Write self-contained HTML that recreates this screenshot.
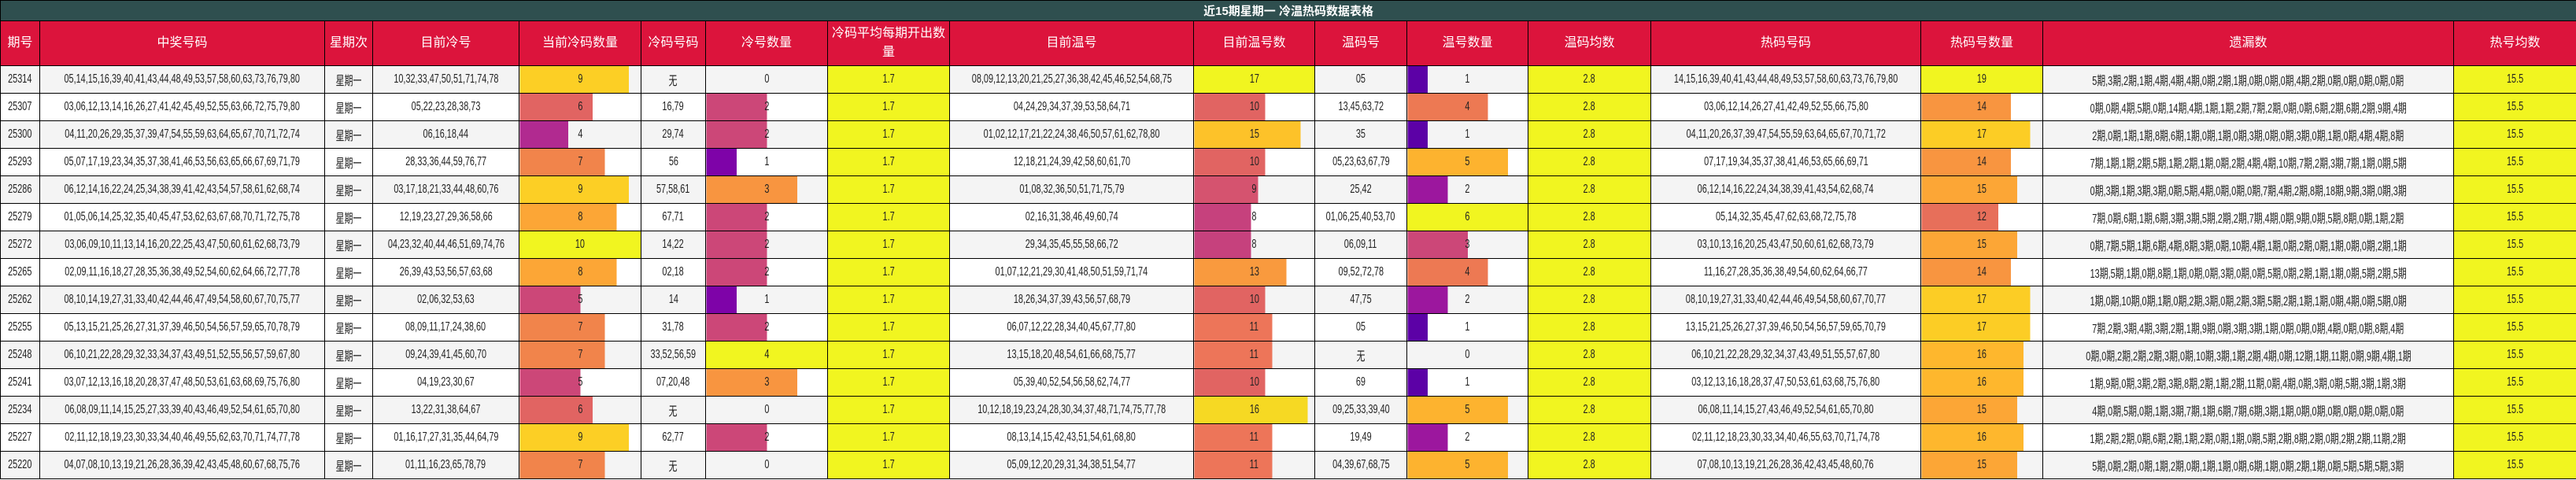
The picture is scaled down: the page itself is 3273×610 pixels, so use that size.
<!DOCTYPE html>
<html><head><meta charset="utf-8">
<style>
body{margin:0;width:3273px;height:610px;overflow:hidden;background:#fff;font-family:"Liberation Sans","Noto Sans CJK SC",sans-serif;}
table{border-collapse:collapse;table-layout:fixed;width:3273px;}
td{border:1px solid #000;text-align:center;vertical-align:middle;font-size:16px;padding:0;height:34px;white-space:nowrap;overflow:hidden;color:#222;}
td span{display:inline-block;transform:scaleX(.68);margin:0 -200px;}
tr:nth-child(odd) td{background-color:#f4f4f4;}
tr.t td{background:#2f4f4f !important;color:#fff;font-weight:bold;font-size:15px;height:25px;}
tr.h td{background:#dc143c !important;color:#fff;font-size:16px;height:56px;white-space:normal;line-height:24px;}
td.y{background:#f1f520 !important;}
</style></head><body>
<table>
<colgroup><col style="width:50px"><col style="width:362px"><col style="width:61px"><col style="width:186px"><col style="width:155px"><col style="width:82px"><col style="width:155px"><col style="width:155px"><col style="width:310px"><col style="width:154px"><col style="width:117px"><col style="width:154px"><col style="width:156px"><col style="width:343px"><col style="width:155px"><col style="width:522px"><col style="width:156px"></colgroup>
<tr class="t"><td colspan="17">近15期星期一 冷温热码数据表格</td></tr>
<tr class="h"><td>期号</td><td>中奖号码</td><td>星期次</td><td>目前冷号</td><td>当前冷码数量</td><td>冷码号码</td><td>冷号数量</td><td>冷码平均每期开出数量</td><td>目前温号</td><td>目前温号数</td><td>温码号</td><td>温号数量</td><td>温码均数</td><td>热码号码</td><td>热码号数量</td><td>遗漏数</td><td>热号均数</td></tr>

<tr><td><span>25314</span></td><td><span>05,14,15,16,39,40,41,43,44,48,49,53,57,58,60,63,73,76,79,80</span></td><td><span>星期一</span></td><td><span>10,32,33,47,50,51,71,74,78</span></td><td style="background-image:linear-gradient(90deg,#fccf25 90%,transparent 90%)"><span>9</span></td><td><span>无</span></td><td><span>0</span></td><td class="y"><span>1.7</span></td><td><span>08,09,12,13,20,21,25,27,36,38,42,45,46,52,54,68,75</span></td><td class="y"><span>17</span></td><td><span>05</span></td><td style="background-image:linear-gradient(90deg,#5c01a6 16.7%,transparent 16.7%)"><span>1</span></td><td class="y"><span>2.8</span></td><td><span>14,15,16,39,40,41,43,44,48,49,53,57,58,60,63,73,76,79,80</span></td><td class="y"><span>19</span></td><td><span>5期,3期,2期,1期,4期,4期,4期,0期,2期,1期,0期,0期,0期,4期,2期,0期,0期,0期,0期,0期</span></td><td class="y"><span>15.5</span></td></tr>

<tr><td><span>25307</span></td><td><span>03,06,12,13,14,16,26,27,41,42,45,49,52,55,63,66,72,75,79,80</span></td><td><span>星期一</span></td><td><span>05,22,23,28,38,73</span></td><td style="background-image:linear-gradient(90deg,#e16462 60%,transparent 60%)"><span>6</span></td><td><span>16,79</span></td><td style="background-image:linear-gradient(90deg,#cc4778 50%,transparent 50%)"><span>2</span></td><td class="y"><span>1.7</span></td><td><span>04,24,29,34,37,39,53,58,64,71</span></td><td style="background-image:linear-gradient(90deg,#e16462 58.8%,transparent 58.8%)"><span>10</span></td><td><span>13,45,63,72</span></td><td style="background-image:linear-gradient(90deg,#ed7953 66.7%,transparent 66.7%)"><span>4</span></td><td class="y"><span>2.8</span></td><td><span>03,06,12,14,26,27,41,42,49,52,55,66,75,80</span></td><td style="background-image:linear-gradient(90deg,#f89540 73.7%,transparent 73.7%)"><span>14</span></td><td><span>0期,0期,4期,5期,0期,14期,4期,1期,1期,2期,7期,2期,0期,0期,6期,2期,6期,2期,9期,4期</span></td><td class="y"><span>15.5</span></td></tr>

<tr><td><span>25300</span></td><td><span>04,11,20,26,29,35,37,39,47,54,55,59,63,64,65,67,70,71,72,74</span></td><td><span>星期一</span></td><td><span>06,16,18,44</span></td><td style="background-image:linear-gradient(90deg,#b12a90 40%,transparent 40%)"><span>4</span></td><td><span>29,74</span></td><td style="background-image:linear-gradient(90deg,#cc4778 50%,transparent 50%)"><span>2</span></td><td class="y"><span>1.7</span></td><td><span>01,02,12,17,21,22,24,38,46,50,57,61,62,78,80</span></td><td style="background-image:linear-gradient(90deg,#fdc229 88.2%,transparent 88.2%)"><span>15</span></td><td><span>35</span></td><td style="background-image:linear-gradient(90deg,#5c01a6 16.7%,transparent 16.7%)"><span>1</span></td><td class="y"><span>2.8</span></td><td><span>04,11,20,26,37,39,47,54,55,59,63,64,65,67,70,71,72</span></td><td style="background-image:linear-gradient(90deg,#fccd25 89.5%,transparent 89.5%)"><span>17</span></td><td><span>2期,0期,1期,1期,8期,6期,1期,0期,1期,0期,3期,0期,0期,3期,0期,1期,0期,4期,4期,8期</span></td><td class="y"><span>15.5</span></td></tr>

<tr><td><span>25293</span></td><td><span>05,07,17,19,23,34,35,37,38,41,46,53,56,63,65,66,67,69,71,79</span></td><td><span>星期一</span></td><td><span>28,33,36,44,59,76,77</span></td><td style="background-image:linear-gradient(90deg,#f1844b 70%,transparent 70%)"><span>7</span></td><td><span>56</span></td><td style="background-image:linear-gradient(90deg,#7e03a8 25%,transparent 25%)"><span>1</span></td><td class="y"><span>1.7</span></td><td><span>12,18,21,24,39,42,58,60,61,70</span></td><td style="background-image:linear-gradient(90deg,#e16462 58.8%,transparent 58.8%)"><span>10</span></td><td><span>05,23,63,67,79</span></td><td style="background-image:linear-gradient(90deg,#fdb32f 83.3%,transparent 83.3%)"><span>5</span></td><td class="y"><span>2.8</span></td><td><span>07,17,19,34,35,37,38,41,46,53,65,66,69,71</span></td><td style="background-image:linear-gradient(90deg,#f89540 73.7%,transparent 73.7%)"><span>14</span></td><td><span>7期,1期,1期,2期,5期,1期,2期,1期,0期,2期,4期,4期,10期,7期,2期,3期,7期,1期,0期,5期</span></td><td class="y"><span>15.5</span></td></tr>

<tr><td><span>25286</span></td><td><span>06,12,14,16,22,24,25,34,38,39,41,42,43,54,57,58,61,62,68,74</span></td><td><span>星期一</span></td><td><span>03,17,18,21,33,44,48,60,76</span></td><td style="background-image:linear-gradient(90deg,#fccf25 90%,transparent 90%)"><span>9</span></td><td><span>57,58,61</span></td><td style="background-image:linear-gradient(90deg,#f89540 75%,transparent 75%)"><span>3</span></td><td class="y"><span>1.7</span></td><td><span>01,08,32,36,50,51,71,75,79</span></td><td style="background-image:linear-gradient(90deg,#d5536f 52.9%,transparent 52.9%)"><span>9</span></td><td><span>25,42</span></td><td style="background-image:linear-gradient(90deg,#9c179e 33.3%,transparent 33.3%)"><span>2</span></td><td class="y"><span>2.8</span></td><td><span>06,12,14,16,22,24,34,38,39,41,43,54,62,68,74</span></td><td style="background-image:linear-gradient(90deg,#fca636 78.9%,transparent 78.9%)"><span>15</span></td><td><span>0期,3期,1期,3期,3期,0期,5期,4期,0期,0期,0期,7期,4期,2期,8期,18期,9期,3期,0期,3期</span></td><td class="y"><span>15.5</span></td></tr>

<tr><td><span>25279</span></td><td><span>01,05,06,14,25,32,35,40,45,47,53,62,63,67,68,70,71,72,75,78</span></td><td><span>星期一</span></td><td><span>12,19,23,27,29,36,58,66</span></td><td style="background-image:linear-gradient(90deg,#fca636 80%,transparent 80%)"><span>8</span></td><td><span>67,71</span></td><td style="background-image:linear-gradient(90deg,#cc4778 50%,transparent 50%)"><span>2</span></td><td class="y"><span>1.7</span></td><td><span>02,16,31,38,46,49,60,74</span></td><td style="background-image:linear-gradient(90deg,#c6417d 47.1%,transparent 47.1%)"><span>8</span></td><td><span>01,06,25,40,53,70</span></td><td class="y"><span>6</span></td><td class="y"><span>2.8</span></td><td><span>05,14,32,35,45,47,62,63,68,72,75,78</span></td><td style="background-image:linear-gradient(90deg,#e76f5a 63.2%,transparent 63.2%)"><span>12</span></td><td><span>7期,0期,6期,1期,6期,3期,3期,5期,2期,2期,7期,4期,0期,9期,0期,5期,8期,0期,1期,2期</span></td><td class="y"><span>15.5</span></td></tr>

<tr><td><span>25272</span></td><td><span>03,06,09,10,11,13,14,16,20,22,25,43,47,50,60,61,62,68,73,79</span></td><td><span>星期一</span></td><td><span>04,23,32,40,44,46,51,69,74,76</span></td><td class="y"><span>10</span></td><td><span>14,22</span></td><td style="background-image:linear-gradient(90deg,#cc4778 50%,transparent 50%)"><span>2</span></td><td class="y"><span>1.7</span></td><td><span>29,34,35,45,55,58,66,72</span></td><td style="background-image:linear-gradient(90deg,#c6417d 47.1%,transparent 47.1%)"><span>8</span></td><td><span>06,09,11</span></td><td style="background-image:linear-gradient(90deg,#cc4778 50%,transparent 50%)"><span>3</span></td><td class="y"><span>2.8</span></td><td><span>03,10,13,16,20,25,43,47,50,60,61,62,68,73,79</span></td><td style="background-image:linear-gradient(90deg,#fca636 78.9%,transparent 78.9%)"><span>15</span></td><td><span>0期,7期,5期,1期,6期,4期,8期,3期,0期,10期,4期,1期,0期,2期,0期,1期,0期,0期,2期,1期</span></td><td class="y"><span>15.5</span></td></tr>

<tr><td><span>25265</span></td><td><span>02,09,11,16,18,27,28,35,36,38,49,52,54,60,62,64,66,72,77,78</span></td><td><span>星期一</span></td><td><span>26,39,43,53,56,57,63,68</span></td><td style="background-image:linear-gradient(90deg,#fca636 80%,transparent 80%)"><span>8</span></td><td><span>02,18</span></td><td style="background-image:linear-gradient(90deg,#cc4778 50%,transparent 50%)"><span>2</span></td><td class="y"><span>1.7</span></td><td><span>01,07,12,21,29,30,41,48,50,51,59,71,74</span></td><td style="background-image:linear-gradient(90deg,#f99a3e 76.5%,transparent 76.5%)"><span>13</span></td><td><span>09,52,72,78</span></td><td style="background-image:linear-gradient(90deg,#ed7953 66.7%,transparent 66.7%)"><span>4</span></td><td class="y"><span>2.8</span></td><td><span>11,16,27,28,35,36,38,49,54,60,62,64,66,77</span></td><td style="background-image:linear-gradient(90deg,#f89540 73.7%,transparent 73.7%)"><span>14</span></td><td><span>13期,5期,1期,0期,8期,1期,0期,0期,3期,0期,0期,5期,0期,2期,1期,1期,0期,5期,2期,5期</span></td><td class="y"><span>15.5</span></td></tr>

<tr><td><span>25262</span></td><td><span>08,10,14,19,27,31,33,40,42,44,46,47,49,54,58,60,67,70,75,77</span></td><td><span>星期一</span></td><td><span>02,06,32,53,63</span></td><td style="background-image:linear-gradient(90deg,#cc4778 50%,transparent 50%)"><span>5</span></td><td><span>14</span></td><td style="background-image:linear-gradient(90deg,#7e03a8 25%,transparent 25%)"><span>1</span></td><td class="y"><span>1.7</span></td><td><span>18,26,34,37,39,43,56,57,68,79</span></td><td style="background-image:linear-gradient(90deg,#e16462 58.8%,transparent 58.8%)"><span>10</span></td><td><span>47,75</span></td><td style="background-image:linear-gradient(90deg,#9c179e 33.3%,transparent 33.3%)"><span>2</span></td><td class="y"><span>2.8</span></td><td><span>08,10,19,27,31,33,40,42,44,46,49,54,58,60,67,70,77</span></td><td style="background-image:linear-gradient(90deg,#fccd25 89.5%,transparent 89.5%)"><span>17</span></td><td><span>1期,0期,10期,0期,1期,0期,2期,3期,0期,2期,3期,5期,2期,1期,1期,0期,4期,0期,5期,0期</span></td><td class="y"><span>15.5</span></td></tr>

<tr><td><span>25255</span></td><td><span>05,13,15,21,25,26,27,31,37,39,46,50,54,56,57,59,65,70,78,79</span></td><td><span>星期一</span></td><td><span>08,09,11,17,24,38,60</span></td><td style="background-image:linear-gradient(90deg,#f1844b 70%,transparent 70%)"><span>7</span></td><td><span>31,78</span></td><td style="background-image:linear-gradient(90deg,#cc4778 50%,transparent 50%)"><span>2</span></td><td class="y"><span>1.7</span></td><td><span>06,07,12,22,28,34,40,45,67,77,80</span></td><td style="background-image:linear-gradient(90deg,#ed7559 64.7%,transparent 64.7%)"><span>11</span></td><td><span>05</span></td><td style="background-image:linear-gradient(90deg,#5c01a6 16.7%,transparent 16.7%)"><span>1</span></td><td class="y"><span>2.8</span></td><td><span>13,15,21,25,26,27,37,39,46,50,54,56,57,59,65,70,79</span></td><td style="background-image:linear-gradient(90deg,#fccd25 89.5%,transparent 89.5%)"><span>17</span></td><td><span>7期,2期,3期,4期,3期,2期,1期,9期,0期,3期,3期,1期,0期,0期,0期,4期,0期,0期,8期,4期</span></td><td class="y"><span>15.5</span></td></tr>

<tr><td><span>25248</span></td><td><span>06,10,21,22,28,29,32,33,34,37,43,49,51,52,55,56,57,59,67,80</span></td><td><span>星期一</span></td><td><span>09,24,39,41,45,60,70</span></td><td style="background-image:linear-gradient(90deg,#f1844b 70%,transparent 70%)"><span>7</span></td><td><span>33,52,56,59</span></td><td class="y"><span>4</span></td><td class="y"><span>1.7</span></td><td><span>13,15,18,20,48,54,61,66,68,75,77</span></td><td style="background-image:linear-gradient(90deg,#ed7559 64.7%,transparent 64.7%)"><span>11</span></td><td><span>无</span></td><td><span>0</span></td><td class="y"><span>2.8</span></td><td><span>06,10,21,22,28,29,32,34,37,43,49,51,55,57,67,80</span></td><td style="background-image:linear-gradient(90deg,#feb72d 84.2%,transparent 84.2%)"><span>16</span></td><td><span>0期,0期,2期,2期,2期,3期,0期,10期,3期,1期,2期,4期,0期,12期,1期,11期,0期,9期,4期,1期</span></td><td class="y"><span>15.5</span></td></tr>

<tr><td><span>25241</span></td><td><span>03,07,12,13,16,18,20,28,37,47,48,50,53,61,63,68,69,75,76,80</span></td><td><span>星期一</span></td><td><span>04,19,23,30,67</span></td><td style="background-image:linear-gradient(90deg,#cc4778 50%,transparent 50%)"><span>5</span></td><td><span>07,20,48</span></td><td style="background-image:linear-gradient(90deg,#f89540 75%,transparent 75%)"><span>3</span></td><td class="y"><span>1.7</span></td><td><span>05,39,40,52,54,56,58,62,74,77</span></td><td style="background-image:linear-gradient(90deg,#e16462 58.8%,transparent 58.8%)"><span>10</span></td><td><span>69</span></td><td style="background-image:linear-gradient(90deg,#5c01a6 16.7%,transparent 16.7%)"><span>1</span></td><td class="y"><span>2.8</span></td><td><span>03,12,13,16,18,28,37,47,50,53,61,63,68,75,76,80</span></td><td style="background-image:linear-gradient(90deg,#feb72d 84.2%,transparent 84.2%)"><span>16</span></td><td><span>1期,9期,0期,3期,2期,3期,8期,2期,1期,2期,11期,0期,4期,0期,3期,0期,5期,3期,1期,3期</span></td><td class="y"><span>15.5</span></td></tr>

<tr><td><span>25234</span></td><td><span>06,08,09,11,14,15,25,27,33,39,40,43,46,49,52,54,61,65,70,80</span></td><td><span>星期一</span></td><td><span>13,22,31,38,64,67</span></td><td style="background-image:linear-gradient(90deg,#e16462 60%,transparent 60%)"><span>6</span></td><td><span>无</span></td><td><span>0</span></td><td class="y"><span>1.7</span></td><td><span>10,12,18,19,23,24,28,30,34,37,48,71,74,75,77,78</span></td><td style="background-image:linear-gradient(90deg,#f6d923 94.1%,transparent 94.1%)"><span>16</span></td><td><span>09,25,33,39,40</span></td><td style="background-image:linear-gradient(90deg,#fdb32f 83.3%,transparent 83.3%)"><span>5</span></td><td class="y"><span>2.8</span></td><td><span>06,08,11,14,15,27,43,46,49,52,54,61,65,70,80</span></td><td style="background-image:linear-gradient(90deg,#fca636 78.9%,transparent 78.9%)"><span>15</span></td><td><span>4期,0期,5期,0期,1期,3期,7期,1期,6期,7期,6期,3期,1期,0期,0期,0期,0期,0期,0期,0期</span></td><td class="y"><span>15.5</span></td></tr>

<tr><td><span>25227</span></td><td><span>02,11,12,18,19,23,30,33,34,40,46,49,55,62,63,70,71,74,77,78</span></td><td><span>星期一</span></td><td><span>01,16,17,27,31,35,44,64,79</span></td><td style="background-image:linear-gradient(90deg,#fccf25 90%,transparent 90%)"><span>9</span></td><td><span>62,77</span></td><td style="background-image:linear-gradient(90deg,#cc4778 50%,transparent 50%)"><span>2</span></td><td class="y"><span>1.7</span></td><td><span>08,13,14,15,42,43,51,54,61,68,80</span></td><td style="background-image:linear-gradient(90deg,#ed7559 64.7%,transparent 64.7%)"><span>11</span></td><td><span>19,49</span></td><td style="background-image:linear-gradient(90deg,#9c179e 33.3%,transparent 33.3%)"><span>2</span></td><td class="y"><span>2.8</span></td><td><span>02,11,12,18,23,30,33,34,40,46,55,63,70,71,74,78</span></td><td style="background-image:linear-gradient(90deg,#feb72d 84.2%,transparent 84.2%)"><span>16</span></td><td><span>1期,2期,2期,0期,6期,2期,1期,2期,0期,1期,0期,5期,2期,8期,2期,0期,2期,2期,11期,2期</span></td><td class="y"><span>15.5</span></td></tr>

<tr><td><span>25220</span></td><td><span>04,07,08,10,13,19,21,26,28,36,39,42,43,45,48,60,67,68,75,76</span></td><td><span>星期一</span></td><td><span>01,11,16,23,65,78,79</span></td><td style="background-image:linear-gradient(90deg,#f1844b 70%,transparent 70%)"><span>7</span></td><td><span>无</span></td><td><span>0</span></td><td class="y"><span>1.7</span></td><td><span>05,09,12,20,29,31,34,38,51,54,77</span></td><td style="background-image:linear-gradient(90deg,#ed7559 64.7%,transparent 64.7%)"><span>11</span></td><td><span>04,39,67,68,75</span></td><td style="background-image:linear-gradient(90deg,#fdb32f 83.3%,transparent 83.3%)"><span>5</span></td><td class="y"><span>2.8</span></td><td><span>07,08,10,13,19,21,26,28,36,42,43,45,48,60,76</span></td><td style="background-image:linear-gradient(90deg,#fca636 78.9%,transparent 78.9%)"><span>15</span></td><td><span>5期,0期,2期,0期,1期,2期,0期,1期,1期,0期,6期,1期,0期,2期,1期,0期,5期,5期,5期,3期</span></td><td class="y"><span>15.5</span></td></tr>
</table>
</body></html>
